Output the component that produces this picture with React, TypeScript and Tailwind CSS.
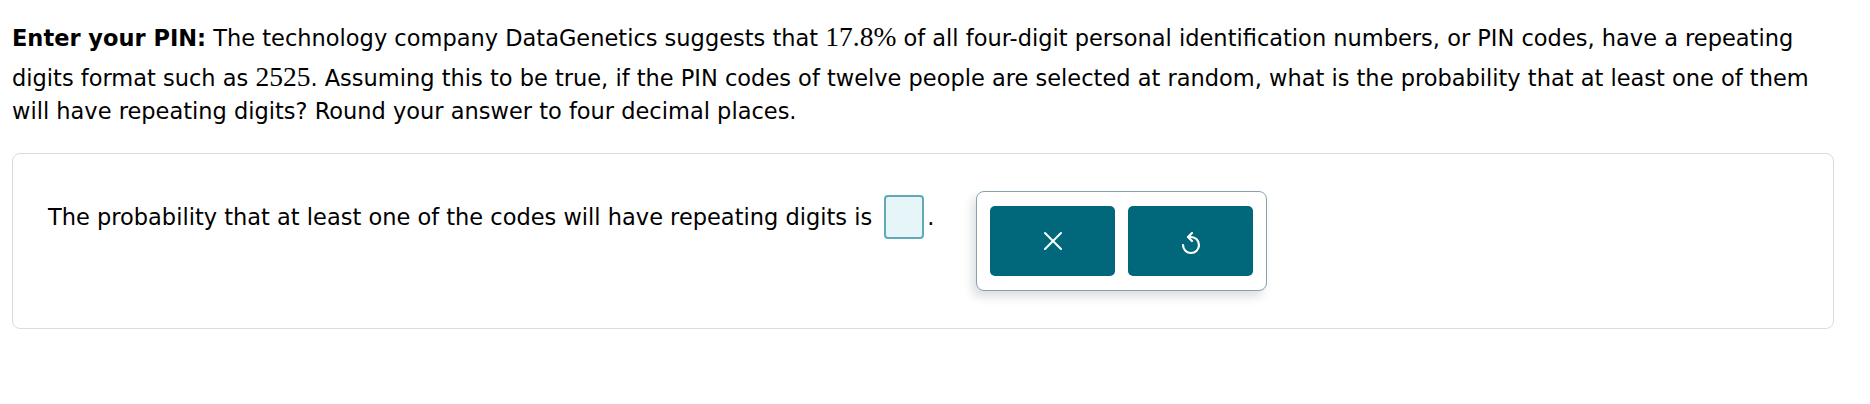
import React from 'react';

const bodyFont = { fontFamily: '"DejaVu Sans", Verdana, sans-serif' };

function MathNum({ children }: { children: React.ReactNode }) {
  // inline math: larger serif, plus an empty strut that raises the line box like MathJax does
  return (
    <>
      <span className="inline-block w-0 h-[31px] align-baseline" />
      <span className="text-[27.5px] font-['Liberation_Serif',serif]">{children}</span>
    </>
  );
}

function CloseIcon() {
  return (
    <svg width="20" height="20" viewBox="0 0 20 20" fill="none" stroke="white" strokeWidth="2" strokeLinecap="round">
      <path d="M2 2 L18 18" />
      <path d="M18 2 L2 18" />
    </svg>
  );
}

function ResetIcon() {
  return (
    <svg width="22" height="27" viewBox="0 0 22 27" fill="none" stroke="white" strokeWidth="2.2" strokeLinecap="round" strokeLinejoin="round">
      <path d="M8 9 H11 A8 8 0 1 1 3 17" />
      <path d="M12 5 L8 9 L12 13" />
    </svg>
  );
}

export default function App() {
  return (
    <div className="w-[1870px] h-[404px] bg-white text-black" style={bodyFont}>
      <p className="pl-[12px] pr-[36px] pt-[15px] text-[22.5px] leading-[33px]">
        <span className="font-bold">Enter your PIN:</span> The technology company DataGenetics suggests that{' '}
        <MathNum>17.8%</MathNum> of all four-digit personal identification numbers, or PIN codes, have a repeating
        digits format such as <MathNum>2525</MathNum>. Assuming this to be true, if the PIN codes of twelve people are
        selected at random, what is the probability that at least one of them will have repeating digits? Round your
        answer to four decimal places.
      </p>

      <div className="ml-[12px] mt-[25px] w-[1822px] h-[176px] rounded-[8px] border border-[#d8dcde] flex items-start pl-[35px] pt-[37px]">
        <div className="mt-[4px] flex items-center h-[44px] text-[22.5px] leading-[28px]">
          <span>The probability that at least one of the codes will have repeating digits is</span>
          <span className="ml-[12px] w-[40px] h-[44px] rounded-[4px] border-2 border-[#62a9b4] bg-[#e6f5f8]" />
          <span className="ml-[3px]">.</span>
        </div>

        <div className="ml-[42px] w-[291px] h-[100px] rounded-[8px] border border-[#8d9fa8] bg-white shadow-[-4px_6px_10px_rgba(40,60,80,0.16)] flex items-center justify-center gap-[13px]">
          <button className="w-[125px] h-[70px] rounded-[5px] bg-[#00687a] flex items-center justify-center">
            <CloseIcon />
          </button>
          <button className="w-[125px] h-[70px] rounded-[5px] bg-[#00687a] flex items-center justify-center">
            <ResetIcon />
          </button>
        </div>
      </div>
    </div>
  );
}
